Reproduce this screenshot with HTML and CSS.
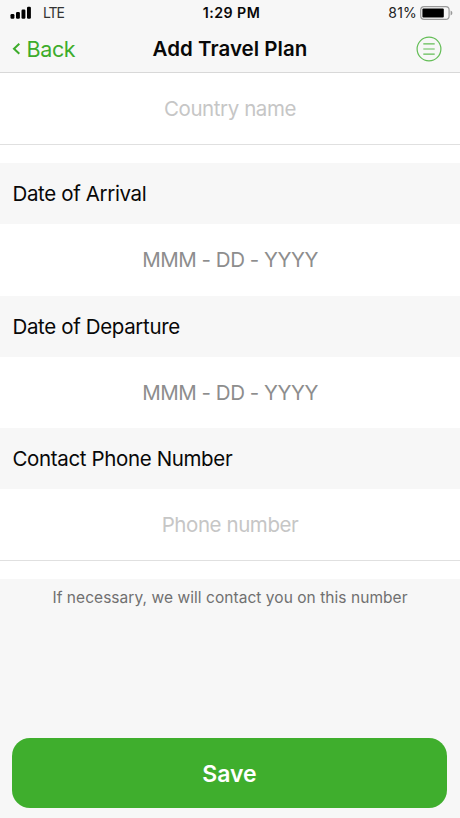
FILE: index.html
```html
<!DOCTYPE html>
<html lang="en">
<head>
<meta charset="utf-8">
<title>Add Travel Plan</title>
<link rel="stylesheet" href="styles.css">
</head>
<body>
<div class="screen">
  <header class="top">
    <div class="status">
      <div class="status-left">
        <svg class="signal" width="22" height="13" viewBox="0 0 22 13"><rect x=".5" y="8" width="3.9" height="4.8" rx="1.2"/><rect x="6" y="6" width="3.9" height="6.8" rx="1.2"/><rect x="11.5" y="3.5" width="3.9" height="9.3" rx="1.2"/><rect x="17" y=".7" width="3.9" height="12.1" rx="1.2"/></svg>
        <span class="carrier">LTE</span>
      </div>
      <span class="time">1:29 PM</span>
      <div class="status-right">
        <span class="percent">81%</span>
        <svg class="battery" width="33" height="14" viewBox="0 0 33 14"><rect x=".7" y=".7" width="28.4" height="12.6" rx="3.4" fill="none" stroke="#999" stroke-width="1.2"/><rect x="2.4" y="2.4" width="21.4" height="9.2" rx="1"/><path d="M30.6 4.6q1.8.8 1.8 2.4t-1.8 2.4z" fill="#999"/></svg>
      </div>
    </div>
    <nav class="nav">
      <a class="back"><svg width="9" height="14" viewBox="0 0 9 14"><path d="M7.3 1.8 2 6.8l5.3 5"/></svg><span class="back-label">Back</span></a>
      <h1 class="title">Add Travel Plan</h1>
      <svg class="menu" width="26" height="26" viewBox="0 0 26 26"><circle cx="13" cy="13" r="11.9"/><path d="M7.3 7.9h11.4M7.3 13h11.4M7.3 18.1h11.4"/></svg>
    </nav>
  </header>
  <main class="form">
    <div class="field country"><span class="placeholder country-text">Country name</span></div>
    <div class="gap"></div>
    <h2 class="label"><span>Date of Arrival</span></h2>
    <div class="field date"><span class="date-text">MMM - DD - YYYY</span></div>
    <h2 class="label"><span>Date of Departure</span></h2>
    <div class="field date departure-date"><span class="date-text">MMM - DD - YYYY</span></div>
    <h2 class="label"><span>Contact Phone Number</span></h2>
    <div class="field phone"><span class="placeholder phone-text">Phone number</span></div>
    <div class="gap"></div>
    <p class="note"><span>If necessary, we will contact you on this number</span></p>
  </main>
  <footer class="footer"><button class="save">Save</button></footer>
</div>
</body>
</html>
```
FILE: styles.css
```css
* { box-sizing: border-box; }
body { margin: 0; font-family: Inter, sans-serif; color: #080808; }
.screen { width: 460px; height: 818px; display: flex; flex-direction: column; background: #f7f7f7; overflow: hidden; }
.top { height: 73px; border-bottom: 1px solid #d8d8d8; background: #f7f7f7; }
.status { height: 25px; display: grid; grid-template-columns: 1fr auto 1fr; align-items: center; padding: 0 7px 0 10px; font-size: 14px; }
.status-left, .status-right { display: flex; align-items: center; }
.status-left { gap: 11px; }
.status-right { justify-content: flex-end; gap: 3px; }
.carrier { letter-spacing: -1.1px; color: #333; }
.percent { letter-spacing: .2px; color: #222; }
.time { font-weight: 600; font-size: 14.2px; letter-spacing: .45px; }
.nav { height: 47px; display: grid; grid-template-columns: 1fr auto 1fr; align-items: center; padding: 0 18px; }
.back { display: flex; align-items: center; gap: 6px; margin-left: -6.5px; color: #3dac2b; font-size: 21.5px; letter-spacing: -.35px; }
.back path { fill: none; stroke: #3dac2b; stroke-width: 2; }
.title { margin: 0; font-size: 20.5px; font-weight: 600; letter-spacing: .03px; }
.menu { justify-self: end; fill: none; stroke: #63bd56; stroke-width: 1.2; }
.form { flex: 1; }
.field { display: flex; align-items: center; justify-content: center; background: #fff; font-size: 20.5px; height: 72px; letter-spacing: -.42px; }
.country, .phone { border-bottom: 1px solid #e0e0e0; }
.country { padding-bottom: 1px; }
.date { padding-bottom: 1px; }
.departure-date { height: 71px; }
.phone { padding-bottom: 1px; }
.gap { height: 18px; background: #fff; }
.label { margin: 0; height: 61px; padding: 0 12.5px; display: flex; align-items: center; font-size: 20.5px; font-weight: 400; letter-spacing: -.36px; }
.placeholder { color: #c6c6c6; }
.date-text { color: #8d8d8d; letter-spacing: -.47px; }
.note { margin: 0; padding-top: 9px; text-align: center; font-size: 15.5px; line-height: 20px; letter-spacing: .05px; color: #707070; }
.footer { padding: 0 12px 10px; }
.save { display: block; width: 435px; height: 70px; padding: 2px 0 0; border: 0; border-radius: 18px; background: #3fae2d; color: #fff; font: 600 23px Inter, sans-serif; }
```
